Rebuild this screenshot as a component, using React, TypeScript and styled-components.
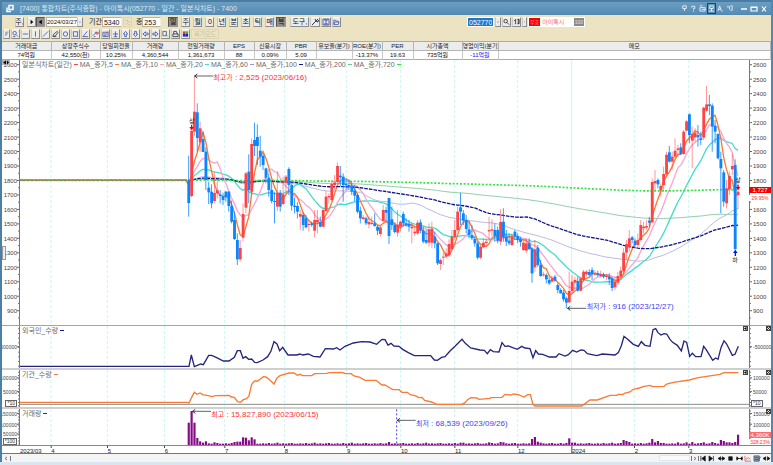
import React from "react";
import styled, { createGlobalStyle, css } from "styled-components";

const FONT = '"Liberation Sans", "Noto Sans CJK KR", sans-serif';

const GlobalStyle = createGlobalStyle`
  * { box-sizing: border-box; }
  html, body { margin: 0; padding: 0; }
  body { font-family: ${FONT}; font-size: 8px; color: #222; background: #d9e6ef; }
  button, input, select { font-family: inherit; margin: 0; }
`;

/* ---------- window frame ---------- */

const Window = styled.div`
  display: flex;
  flex-direction: column;
  height: 100vh;
  min-height: 300px;
  overflow: hidden;
`;

const Frame = styled.div`
  flex: 1;
  min-height: 0;
  display: flex;
  flex-direction: column;
  border-left: 2px solid #4d7fa6;
  border-right: 2px solid #5288b0;
  background: #fff;
`;

const TitleBar = styled.header`
  flex: none;
  display: flex;
  align-items: center;
  height: 15px;
  padding: 2px 2px 0 4px;
  background: linear-gradient(#4a7da4 0 2px, #6b9dc1 2px, #568cb5 14px, #4f83ab);
`;

const Title = styled.h1`
  margin: 0 0 0 6px;
  flex: 1;
  font-size: 7px;
  line-height: 12px;
  font-weight: 400;
  color: #dce9f3;
  white-space: pre;
`;

const WindowButtons = styled.div`
  display: flex;
  align-items: center;
  margin-left: 5px;
`;

const TitleButton = styled.button<{ $boxed?: boolean; $wide?: boolean }>`
  display: flex;
  align-items: center;
  justify-content: center;
  width: ${(p) => (p.$wide ? 10 : 9)}px;
  height: 11px;
  padding: 0;
  border: 1px solid ${(p) => (p.$boxed ? "#23425c" : "transparent")};
  background: transparent;
`;

/* ---------- toolbars ---------- */

const Toolbars = styled.div`
  flex: none;
  display: flex;
  flex-direction: column;
  gap: 2px;
  height: 26px;
  padding-top: 2px;
  background: #ebe3c2;
`;

const Bar = styled.div<{ $indent: number }>`
  display: flex;
  align-items: center;
  height: 10px;
  padding-left: ${(p) => p.$indent}px;
`;

const Cluster = styled.div<{ $gap: number; $after: number }>`
  display: flex;
  align-items: center;
  flex: none;
  gap: ${(p) => p.$gap}px;
  margin-right: ${(p) => p.$after}px;
`;

const ToolButton = styled.button<{ $w?: number; $on?: boolean }>`
  display: flex;
  align-items: center;
  justify-content: center;
  flex: none;
  width: ${(p) => p.$w ?? 9}px;
  height: 10px;
  padding: 0;
  border: 1px solid;
  border-color: ${(p) => (p.$on ? "#555 #999 #999 #555" : "#f8f8f8 #8b8b8b #8b8b8b #c8c8c8")};
  background: ${(p) => (p.$on ? "#8d8d8d" : "#ececec")};
  color: #111;
  font-size: 7px;
  line-height: 8px;
  white-space: nowrap;
  overflow: hidden;

  &:disabled {
    border-color: #ddd5b5;
    background: #ebe3c2;
    color: #c9c09c;
    font-size: 6px;
  }
`;

const Field = styled.input<{ $w: number; $selected?: boolean }>`
  width: ${(p) => p.$w}px;
  height: 10px;
  padding: 0 1px;
  border: 1px solid #b9b39a;
  border-right-color: #eee;
  background: #fff;
  color: #111;
  font-size: 7px;
  line-height: 8px;
  ${(p) =>
    p.$selected &&
    css`
      background: #1a78d0;
      color: #fff;
      border-color: #fff;
    `}
`;

const FieldLabel = styled.label`
  font-size: 7px;
  line-height: 10px;
  white-space: nowrap;
`;

const Combo = styled.div`
  display: flex;
  flex: none;
  height: 10px;
  background: #fff;
`;

const DateSelect = styled.select`
  appearance: none;
  width: 31px;
  height: 10px;
  padding: 0;
  border: 1px solid #b9b39a;
  border-right: 0;
  border-radius: 0;
  background: #fff;
  color: #111;
  font-size: 6px;
  line-height: 8px;
`;

const StockName = styled.div`
  display: flex;
  align-items: center;
  flex: none;
  width: 57px;
  height: 10px;
  gap: 2px;
  background: #fff;
  border: 1px solid #fff;
  color: #ff6f78;
  font-size: 6px;
  line-height: 8px;
`;

const Badge = styled.span<{ $tone: "alert" | "muted" }>`
  flex: none;
  height: 8px;
  padding: 0 1px;
  background: ${(p) => (p.$tone === "alert" ? "#f50000" : "#8a8a8a")};
  color: ${(p) => (p.$tone === "alert" ? "#ffa5a5" : "#e0e0e0")};
  font-size: 5px;
  line-height: 8px;
  white-space: nowrap;
`;

const NameText = styled.span`
  flex: 1;
  white-space: nowrap;
`;

const Spacer = styled.div`
  flex: 1;
`;

const StockCluster = styled.div`
  display: flex;
  align-items: center;
  flex: none;
  gap: 1px;
  margin-right: 186px;
`;

/* ---------- summary table ---------- */

const Summary = styled.table`
  flex: none;
  width: 100%;
  height: 19px;
  table-layout: fixed;
  border-collapse: collapse;
  border-top: 1px solid #aaa;
  border-bottom: 1px solid #aaa;
`;

const HeadCell = styled.th`
  height: 9px;
  padding: 0;
  border-right: 1px solid #b5b5b5;
  border-bottom: 1px solid #b5b5b5;
  background: #ececec;
  font-size: 6px;
  line-height: 8px;
  font-weight: 400;
  white-space: nowrap;
  overflow: hidden;
`;

const ValueCell = styled.td<{ $down?: boolean }>`
  height: 8px;
  padding: 0;
  border-right: 1px solid #c8c8c8;
  text-align: center;
  font-size: 6px;
  line-height: 8px;
  color: ${(p) => (p.$down ? "#1111ee" : "#111")};
  white-space: nowrap;
`;

/* ---------- chart ---------- */

const Chart = styled.main`
  flex: 1;
  min-height: 0;
  display: flex;
  flex-direction: column;
`;

const Panel = styled.section<{ $grow: number; $rule: number }>`
  display: grid;
  grid-template-columns: 18px minmax(0, 1fr) 22px;
  grid-template-rows: minmax(0, 1fr);
  flex: ${(p) => p.$grow} 1 0px;
  min-height: 0;
  position: relative;
  border-bottom: ${(p) => p.$rule}px solid ${(p) => (p.$rule === 1 ? "#a4a4a4" : "#cfcfcf")};
`;

const Canvas = styled.svg`
  display: block;
  width: 100%;
  height: 100%;
  overflow: hidden;
  font-family: ${FONT};
`;

const Legend = styled.div`
  position: absolute;
  top: 0;
  left: 20px;
  display: flex;
  align-items: center;
  gap: 2px;
  height: 9px;
  color: #6a6a6a;
  font-size: 7px;
  line-height: 9px;
  white-space: nowrap;
`;

const Dash = styled.i<{ $c: string }>`
  width: 4px;
  height: 1px;
  background: ${(p) => p.$c};
`;

const PanelButton = styled.button<{ $right: number }>`
  position: absolute;
  top: 0;
  right: ${(p) => p.$right}px;
  display: flex;
  align-items: center;
  justify-content: center;
  width: 5px;
  height: 5px;
  padding: 0;
  border: 1px solid #444;
  background: #ddd;
`;

const CornerButton = styled.button`
  position: absolute;
  top: 0;
  left: 0;
  display: flex;
  width: 8px;
  height: 5px;
  padding: 0;
  border: 0;
  background: #b4b4b4;
`;

const SideHandle = styled.button`
  position: absolute;
  top: 70%;
  left: 0;
  width: 4px;
  height: 14px;
  padding: 0;
  border: 1px solid #999;
  background: #eee;
`;

const ScaleTag = styled.span<{ $side: "left" | "right"; $bottom: number }>`
  position: absolute;
  ${(p) => (p.$side === "left" ? "right: calc(100% - 15px);" : "left: calc(100% - 20px);")}
  bottom: ${(p) => p.$bottom}px;
  padding: 0 1px;
  border: 1px solid #666;
  background: #fff;
  font-size: 5px;
  line-height: 5px;
  color: #333;
`;

const PriceTag = styled.span<{ $top: string; $bg?: string; $c: string }>`
  position: absolute;
  right: 0;
  top: ${(p) => p.$top};
  width: 22px;
  text-align: center;
  font-size: ${(p) => (p.$bg ? 6 : 5)}px;
  line-height: 6px;
  background: ${(p) => p.$bg ?? "#fff"};
  color: ${(p) => p.$c};
`;

const TimeAxis = styled.div`
  flex: none;
  height: 9px;
  padding: 0 22px 0 18px;
  border-top: 1px solid #888;
  border-bottom: 1px solid #777;
`;

const ScrollRow = styled.footer`
  flex: none;
  display: flex;
  align-items: center;
  height: 8px;
  background: #f4f4f4;
`;

const ScrollTrack = styled.div`
  flex: 1;
  display: flex;
  justify-content: flex-end;
  height: 6px;
`;

const ScrollThumb = styled.div`
  width: 31px;
  height: 6px;
  border: 1px solid #e6e6e6;
  background: #fafafa;
`;

const NavButton = styled.button`
  display: flex;
  align-items: center;
  justify-content: center;
  width: 9px;
  height: 7px;
  padding: 0;
  border: 0;
  background: transparent;
`;

const StatusStrip = styled.div`
  flex: none;
  height: 3px;
  background: #d9e6ef;
`;

/* ---------- data: three chart units per pixel, y grows downwards ---------- */

const FLAT = 361;
const FIRST_X = 566;
const STEP = 8.583;

// direction, high, body top, body bottom, low
const CANDLES = `
d287 361 429 470|u212 212 408 412|u48 155 215 228|d130 157 234 275|u185 205 247 275|d215 237 276 276|d262 275 360 390|d365 383 397 432|d373 395 430 445|u335 399 423 430
u355 391 400 415|d390 404 408 430|d398 409 420 435|d393 395 412 425|d393 395 438 455|d422 438 485 490|d455 480 537 540|d520 540 598 615|u540 564 598 605|u430 462 533 545
u335 340 443 460|d283 335 390 430|u235 252 395 405|d188 240 258 288|d193 231 258 315|d227 272 290 320|d280 287 315 330|d323 325 353 370|d340 353 390 410|d365 390 423 430
d395 423 426 490|u335 398 440 453|d390 398 440 455|u350 403 432 435|u345 350 368 400|d322 327 375 405|d370 375 437 452|d413 437 441 460|d427 438 455 475|u450 462 470 510
d458 465 495 512|d465 475 502 505|u480 492 495 515|d485 490 495 500|u450 480 512 532|u450 480 487 520|d470 486 500 502|u445 450 500 502|u393 410 453 455|u400 408 412 430
u360 372 420 425|u345 367 375 390|u307 318 366 372|d318 347 352 380|d340 350 375 425|d355 372 376 390|d360 375 380 390|d365 378 395 405|d375 392 407 425|d400 405 455 460
d440 452 475 490|u465 472 477 480|d470 475 490 495|u470 486 493 505|u470 488 492 495|d460 490 498 500|d495 500 512 525|u495 502 522 530|u435 450 483 485|d440 450 458 485
d413 414 528 552|d440 478 495 510|d490 495 516 520|u450 495 518 530|u482 485 500 515|d455 462 490 500|d475 490 495 500|d480 492 500 515|u490 500 505 550|u500 515 520 528
u480 488 520 525|d478 487 512 520|d500 512 545 550|d510 540 548 552|u490 508 548 560|u485 506 548 565|d515 530 550 565|d548 550 610 615|u595 600 612 630|u575 590 592 615
u565 580 590 595|u538 552 585 590|u510 530 567 570|u480 510 532 540|u440 455 510 515|d398 442 455 495|d450 460 482 495|d465 480 507 520|d485 508 525 535|d495 525 535 540
d528 537 550 560|d545 550 593 598|u555 560 593 598|u535 548 562 565|u535 545 549 560|u470 510 514 540|u478 508 512 530|d490 510 528 545|d500 510 542 550|u448 486 545 555
d445 485 533 545|d510 530 545 558|d520 542 550 555|u520 530 555 558|d510 515 530 540|d520 528 540 550|d530 538 546 560|u540 548 570 573|u538 550 572 580|d535 550 567 570
d562 565 640 668|u540 568 622 635|d555 563 615 620|d600 615 648 650|u635 643 646 650|d640 645 658 670|d650 660 670 675|u648 655 665 668|d645 650 662 665|d670 675 690 700
d685 690 700 700|d690 698 718 725|d710 715 728 745|u635 693 727 730|u645 665 693 700|u650 660 668 690|d650 663 692 695|u650 655 692 695|u630 635 660 665|u630 635 643 650
d628 636 645 650|d622 630 642 660|u632 640 644 648|d632 640 646 650|u632 642 648 652|d638 644 650 655|u642 648 651 660|d640 650 658 675|d650 655 684 693|u650 666 682 690
u636 648 668 675|u620 632 650 655|u565 578 634 640|u540 552 578 600|u510 535 562 575|d528 532 540 550|d535 542 555 565|u520 540 555 562|u480 495 540 545|u485 500 505 520
u480 498 503 510|d470 482 488 500|u355 366 487 490|u330 363 370 390|d355 360 373 385|u370 378 390 410|u320 342 375 395|u275 284 343 350|d258 277 305 308|u275 290 305 330
u235 272 290 295|u255 265 270 290|d250 262 282 285|u210 215 282 285|u180 184 212 215|d160 163 225 250|u200 222 242 325|u205 218 232 245|d195 225 232 260|d215 235 240 255
u140 143 233 240|u78 133 152 155|d105 133 138 165|d130 137 200 275|d180 198 215 250|d220 222 295 298|d275 297 325 460|d330 337 425 440|u360 385 430 445|u335 348 388 405
u282 318 328 345|d298 315 567 572|u360 395 405 448`
  .trim()
  .split(/[|\n]/)
  .map((row) => {
    const [high, top, bottom, low] = row.slice(1).split(" ").map(Number);
    return { up: row[0] === "u", high, top, bottom, low };
  });

const CLOSES = CANDLES.map((c) => (c.up ? c.top : c.bottom));

function movingAverage(days: number): string {
  let sum = FLAT * days;
  const points = [`60,${FLAT}`, `${FIRST_X - STEP},${FLAT}`];
  CLOSES.forEach((close, i) => {
    sum += close - (i >= days ? CLOSES[i - days] : FLAT);
    points.push(`${(FIRST_X + STEP * i).toFixed(1)},${(sum / days).toFixed(1)}`);
  });
  return points.join(" ");
}

const AVERAGES = [
  { days: 200, color: "#8fd0a8", width: 3 },
  { days: 60, color: "#bcb8e0", width: 3 },
  { days: 20, color: "#48dccb", width: 4 },
  { days: 10, color: "#f7a6d6", width: 4 },
  { days: 5, color: "#fb7a35", width: 4 },
  { days: 100, color: "#15158a", width: 4, dash: "11 3" },
  { days: 720, color: "#2fe43f", width: 5, dash: "6 5" },
];

const FOREIGN =
  "60,199 567,199 574,165 583,200 592,196 602,192 610,194 617,182 626,166 635,166 650,173 670,183 687,183 703,172 712,152 721,152 729,175 737,170 746,178 755,177 764,187 772,188 789,180 803,170 813,153 822,125 831,132 839,152 848,142 864,165 890,165 900,162 908,165 925,162 940,169 960,171 976,146 1000,147 1010,143 1020,150 1035,139 1060,129 1085,125 1110,126 1130,133 1146,118 1155,119 1164,135 1173,130 1182,138 1197,139 1208,148 1225,158 1243,167 1292,167 1303,180 1312,181 1325,172 1335,170 1350,153 1365,139 1386,118 1396,130 1412,144 1440,150 1453,151 1462,161 1471,149 1480,155 1497,156 1506,128 1515,139 1525,138 1538,143 1552,148 1565,139 1575,144 1590,146 1599,173 1607,152 1615,162 1628,163 1648,171 1668,171 1677,161 1695,168 1705,164 1718,151 1730,156 1743,150 1752,151 1762,161 1790,167 1807,162 1845,165 1855,158 1864,137 1872,109 1882,117 1900,133 1915,139 1924,125 1935,136 1950,139 1959,89 1967,86 1974,98 1983,105 1992,101 2000,102 2010,118 2018,127 2032,136 2044,153 2052,123 2060,127 2069,169 2077,160 2087,170 2103,170 2111,139 2120,151 2138,181 2147,174 2154,178 2163,143 2172,122 2180,132 2197,166 2205,163 2215,139";

const INSTITUTION =
  "60,307 560,307 567,309 576,290 583,277 591,283 600,279 608,284 625,287 635,290 647,287 687,286 695,291 703,292 713,305 721,307 730,299 740,296 747,288 755,253 764,243 773,243 790,230 798,231 812,242 822,252 831,234 840,227 867,219 882,219 892,226 900,223 908,227 935,227 944,221 980,220 988,218 1027,217 1035,221 1053,221 1062,228 1080,232 1095,241 1128,241 1146,255 1155,255 1170,264 1178,269 1197,269 1206,277 1222,277 1231,284 1245,287 1257,293 1266,292 1274,301 1295,306 1310,313 1385,313 1395,308 1403,299 1412,293 1430,294 1437,298 1470,295 1472,293 1506,292 1515,283 1533,285 1540,282 1555,284 1572,291 1583,284 1591,284 1599,313 1605,318 1745,318 1752,313 1770,300 1792,300 1830,286 1850,286 1855,283 1870,283 1875,279 1890,276 1900,268 1918,264 1932,259 1950,256 1958,260 1992,259 2000,252 2020,247 2068,240 2095,233 2160,223 2172,218 2215,218";

const QUIET_VOLUME = [5, 4, 6, 4, 5, 7, 4, 5, 4, 5, 6, 4, 4];
const BUSY_VOLUME: Record<number, number> = {
  0: 67, 1: 102, 2: 67, 3: 21, 4: 11, 6: 11, 9: 8, 16: 9, 17: 10, 18: 10, 19: 23, 20: 22, 21: 14,
  22: 23, 23: 17, 70: 9, 95: 7, 105: 8, 109: 9, 110: 8, 119: 5, 120: 18, 121: 24, 122: 10, 123: 7,
  130: 6, 133: 20, 134: 7, 151: 6, 152: 15, 153: 12, 154: 9, 162: 18, 163: 8, 164: 12, 165: 6,
  171: 8, 174: 8, 176: 9, 180: 8, 183: 9, 186: 15, 187: 12, 188: 8, 189: 8, 190: 6, 191: 9, 192: 31,
};

const MONTHS: Array<[string, number]> = [
  ["4", 153], ["5", 322], ["6", 493], ["7", 674], ["8", 853], ["9", 1040],
  ["10", 1202], ["11", 1364], ["12", 1553], ["2024", 1715], ["2", 1903], ["3", 2066],
];

const atX = (x: number) => `${((x - 60) / 2187) * 100}%`;

/* ---------- chart parts ---------- */

function Plot({ top, height, children, overlay }: {
  top: number;
  height: number;
  children: React.ReactNode;
  overlay?: React.ReactNode;
}) {
  return (
    <Canvas>
      <svg viewBox={`60 ${top} 2187 ${height}`} preserveAspectRatio="none" width="100%" height="100%">
        {MONTHS.map(([name, x]) => (
          <line key={name} x1={x} x2={x} y1={top} y2={top + height} stroke="#cdf5f5" strokeWidth="3"
            strokeDasharray={name === "2024" ? undefined : "9 6"} />
        ))}
        {children}
      </svg>
      {overlay}
    </Canvas>
  );
}

function Note({ x, y, color, name, value }: {
  x: number;
  y: string;
  color: string;
  name: string;
  value: string;
}) {
  return (
    <text x={atX(x)} y={y} fontSize="8" fill={color}>
      <tspan fontSize="7">{name}</tspan> : {value}
    </text>
  );
}

function Pointer({ x, y, length }: { x: number; y: number; length: number }) {
  return (
    <g stroke="#444" strokeWidth="2.5" fill="none">
      <path d={`M${x} ${y}h${length}`} />
      <path d={`M${x + 9} ${y - 6}L${x + 1} ${y}l8 6`} stroke="#111" />
    </g>
  );
}

function Axis({ side, labels, minor }: {
  side: "left" | "right";
  labels: Array<[string, number]>;
  minor: number[];
}) {
  const left = side === "left";
  return (
    <Canvas>
      <rect x={left ? 17 : 0} y="0" width="1" height="100%" fill="#777" />
      {minor.map((y) => (
        <rect key={y} x={left ? 16 : 1} y={`${y}%`} width="1" height="1" fill="#777" />
      ))}
      {labels.map(([text, y]) => (
        <g key={text + y}>
          <rect x={left ? 15 : 1} y={`${y}%`} width="2" height="1" fill="#666" />
          <text x={left ? 15 : 4} y={`${y}%`} dy="3" fontSize={text.length > 4 ? 5 : 6} fill="#444"
            textAnchor={left ? "end" : "start"}>{text}</text>
        </g>
      ))}
    </Canvas>
  );
}

const priceY = (price: number) => ((4.2 + (2600 - price) * 0.1447) / 265) * 100;
const PRICE_LABELS: Array<[string, number]> = Array.from({ length: 18 }, (_, i) => {
  const price = 2600 - i * 100;
  return [String(price), priceY(price)];
});
// The current price and its change take the place of the 1700 label.
const RIGHT_PRICE_LABELS = PRICE_LABELS.filter(([text]) => text !== "1700");
const PRICE_MINOR = Array.from({ length: 18 }, (_, i) => priceY(2550 - i * 100));
const spread = (count: number) => Array.from({ length: count }, (_, i) => ((i + 0.5) / count) * 100);

function Averages() {
  return (
    <>
      {AVERAGES.map((a) => (
        <polyline key={a.days} points={movingAverage(a.days)} fill="none" stroke={a.color}
          strokeWidth={a.width} strokeDasharray={a.dash} />
      ))}
      <path d="M60 361H560" stroke="#b0744f" strokeWidth="4" />
      <path d="M60 361H560" stroke="#62b850" strokeWidth="4" strokeDasharray="6 8" />
    </>
  );
}

function Candles() {
  return (
    <>
      {CANDLES.map((c, i) => {
        const x = FIRST_X + STEP * i;
        const color = c.up ? "#ff4345" : "#0a84ff";
        return (
          <g key={i} fill={color}>
            <rect x={x - 1.5} y={c.high} width="3" height={c.low - c.high} opacity={c.up ? 0.55 : 0.8} />
            <rect x={x - 4} y={c.top} width="8.5" height={Math.max(3, c.bottom - c.top)} />
          </g>
        );
      })}
    </>
  );
}

function Volumes() {
  return (
    <>
      {CANDLES.map((_, i) => {
        const h = BUSY_VOLUME[i] ?? QUIET_VOLUME[i % QUIET_VOLUME.length];
        return <rect key={i} x={FIRST_X - 3 + STEP * i} y={435 - h} width="6.5" height={h} fill="#850a85" />;
      })}
    </>
  );
}

/* ---------- small icons ---------- */

const ICONS: Record<string, React.ReactNode> = {
  frame: <path d="M3 7V1h4M3 4h3" />,
  search: <><circle cx="3" cy="3" r="2" /><path d="M4.500 4.500L7 7M1 7h3" /></>,
  hline: <path d="M1 4h6" />,
  vline: <path d="M4 1v6" />,
  slash: <path d="M1 7L7 1" />,
  pen: <path d="M1 7l1-3 4-3 1 1-3 4zM2 7h3" stroke="#333" />,
  circle: <circle cx="4" cy="4" r="2.500" />,
  square: <rect x="1.500" y="1.500" width="5" height="5" />,
  angle: <path d="M6 1L1 7h6" />,
  mark: <><path d="M1 6l4-4M2 7h2" /><path d="M4 2h3v2H5z" stroke="#b33" /></>,
  note: <><path d="M1 2h6v5H1zM2 4h4M2 6h3" /><path d="M5 3l2-2" stroke="#b33" /></>,
  cross: <path d="M4 1v6M1 4h6M2 7h4" />,
  up: <path d="M4 1L1.500 4H3v3h2V4h1.500z" />,
  down: <path d="M4 7L1.500 4H3V1h2v3h1.500z" />,
  left: <path d="M1 4l3-2.500V3h3v2H4v1.500z" />,
  right: <path d="M7 4L4 1.500V3H1v2h3v1.500z" />,
  copy: <><path d="M1 1h4v5H1z" stroke="#455" /><path d="M4 4l3 3" stroke="#2a8" /></>,
  print: <path d="M1 4h6v3H1zM2 4V1h3l1 3" stroke="#223" />,
  palette: <><path d="M1 1h3v3H1z" fill="#e33" stroke="none" /><path d="M4 1h3v3H4z" fill="#3b3" stroke="none" /><path d="M1 4h3v3H1z" fill="#22d" stroke="none" /><path d="M4 4h3v3H4z" fill="#228" stroke="none" /></>,
  wrench: <path d="M1 7l4-4M4 1l1 2 2 1 .5-2M5 3l2-2" stroke="#223" />,
  save: <path d="M1 1h6v6H1zM3 1v2h2V1M3 7V5h2v2" />,
  open: <path d="M1 7V2h2l1 1h2v1M1 7l1-3h5L6 7z" />,
  find: <><circle cx="3" cy="3" r="2" stroke="#222" /><path d="M4.500 4.500L7 7" stroke="#222" /></>,
  sound: <path d="M3 6V1M2 6h1M1 3l2-2M5 1h2v5H5M6 1v5" stroke="#222" />,
  caret: <path d="M2.500 3.500h3L4 5.500z" fill="#333" stroke="none" />,
  play: <path d="M3 1.500v5L6 4z" fill="#000" stroke="none" />,
  back: <path d="M5.500 1.500v5L2 4z" fill="#000" stroke="none" />,
  steps: <path d="M1 2h3v2h3M2 6h2M5 7h2" stroke="#c9c09c" />,
};

function Icon({ name }: { name: string }) {
  return (
    <svg width="8" height="8" viewBox="0 0 8 8" fill="none" stroke="#3a4f9e" strokeWidth="0.9">
      {ICONS[name]}
    </svg>
  );
}

const TITLE_ICONS: Array<[string, React.ReactNode, boolean?]> = [
  ["고정", <path d="M2 1h4v3H2zM4 4v3" />],
  ["도움말", <path d="M2 3V1.500h3.500V4H4v1M4 6v1.500" />],
  ["화면 복사", <path d="M1 3h6v4H1zM1 1h3M3 5h4" />],
  ["글꼴", <path d="M2 1h4v3H2zM4 4v3M1 7h6" />, true],
  ["글자 크기", <path d="M1 7l2-6 2 6M2 5h2M6 7h1" />],
  ["메뉴", <path d="M1 2h3M4 2v3M5 1h2v5H5" />],
];

const WINDOW_ICONS: Array<[string, React.ReactNode]> = [
  ["최소화", <path d="M1 4h6" strokeWidth="1.500" />],
  ["최대화", <path d="M1 2h6v4H1zM1 2.500h6" />],
  ["닫기", <path d="M2 1.500l4 5M6 1.500l-4 5" />],
];

const NAV_ICONS: Array<[string, React.ReactNode]> = [
  ["처음", <path d="M2 1v6M7 1v6L3 4z" />],
  ["끝", <path d="M6 1v6M1 1v6l4-3z" />],
  ["확대", <path d="M1 4l3-2v4zM9 4L6 2v4zM3 4h4" />],
  ["정지", <path d="M3 2h4v4H3z" />],
  ["축소", <path d="M4 4L2 2v4zM6 4l2-2v4zM1 4h8" />],
  ["추세", <path d="M1 1v6h7M2 5l3-2 2 2" fill="none" stroke="#d33" />],
  ["표시", <path d="M1 1h6v6H1zM2 3h4M2 5h4M5 6l4-4" fill="#9ab" stroke="#334" />],
  ["좌우", <path d="M1 4l3-2v4zM9 4L6 2v4z" />],
];

/* ---------- page ---------- */

const PERIODS = ["일", "주", "월", "0", "년", "분", "초", "틱"];

const DRAW_TOOLS: Array<[string, string]> = [
  ["탐색", "search"], ["수평선", "hline"], ["수직선", "vline"], ["추세선", "slash"], ["펜", "pen"],
  ["원", "circle"], ["사각형", "square"], ["각도", "angle"], ["표시", "mark"], ["메모", "note"],
  ["십자선", "cross"], ["위", "up"], ["아래", "down"], ["왼쪽", "left"], ["오른쪽", "right"],
  ["복사", "copy"], ["인쇄", "print"], ["색상", "palette"],
];

const COLUMNS: Array<[string, string, number?]> = [
  ["거래대금", "74억원", 49], ["상장주식수", "42,550(천)", 49], ["당일회전율", "10.25%", 32],
  ["거래량", "4,360,544", 46], ["전일거래량", "1,361,673", 46], ["EPS", "88", 30],
  ["신용시장", "0.09%", 32], ["PBR", "5.09", 30], ["유보율(분기)", "", 36],
  ["ROE(분기)", "-13.37%", 30], ["PER", "19.63", 31], ["시가총액", "735억원", 49],
  ["영업이익(분기)", "-11억원", 36], ["메모", ""],
];

const LEGEND: Array<[string, string]> = [
  ["일본식차트(일간)", "#ff4345"], ["MA_종가,5", "#fb7a35"], ["MA_종가,10", "#f7a6d6"],
  ["MA_종가,20", "#48dccb"], ["MA_종가,60", "#9c97d4"], ["MA_종가,100", "#15158a"],
  ["MA_종가,200", "#6cc48e"], ["MA_종가,720", "#2fe43f"],
];

function PanelButtons() {
  return (
    <>
      <PanelButton $right={23} aria-label="지표 이동"><svg width="3" height="3"><path d="M2.500 0v3L0 1.500z" /></svg></PanelButton>
      <PanelButton $right={0} aria-label="지표 닫기"><svg width="3" height="3"><path d="M0 0l3 3M3 0L0 3" stroke="#333" /></svg></PanelButton>
    </>
  );
}

export default function App() {
  return (
    <Window>
      <GlobalStyle />
      <Frame>
        <TitleBar>
          <svg width="8" height="9" viewBox="0 0 8 9" fill="none" stroke="#fff" strokeWidth="1.500">
            <path d="M3 1.500h4v4H3z" /><path d="M5 7.500H1v-4" />
          </svg>
          <Title>[7400] 통합차트(주식종합) - 아이톡시(052770 - 일간 - 일본식차트) - 7400</Title>
          <WindowButtons>
            {TITLE_ICONS.map(([name, shape, boxed]) => (
              <TitleButton key={name} aria-label={name} $boxed={boxed}>
                <svg width="7" height="7" viewBox="0 0 8 8" fill="none" stroke="#eef4f9" strokeWidth="1">{shape}</svg>
              </TitleButton>
            ))}
          </WindowButtons>
          <WindowButtons>
            {WINDOW_ICONS.map(([name, shape]) => (
              <TitleButton key={name} aria-label={name} $wide>
                <svg width="8" height="8" viewBox="0 0 8 8" fill="none" stroke="#fff" strokeWidth="1.200">{shape}</svg>
              </TitleButton>
            ))}
          </WindowButtons>
        </TitleBar>

        <Toolbars>
          <Bar $indent={13}>
            <Cluster $gap={0} $after={3}><ToolButton>주,</ToolButton></Cluster>
            <Cluster $gap={0} $after={1}>
              <ToolButton aria-label="다음"><Icon name="play" /></ToolButton>
              <ToolButton $on aria-label="이전"><Icon name="back" /></ToolButton>
            </Cluster>
            <Cluster $gap={0} $after={6}>
              <Combo>
                <DateSelect aria-label="기준일" defaultValue="2024/03/27"><option>2024/03/27</option></DateSelect>
                <ToolButton $w={6} aria-label="날짜 열기"><Icon name="caret" /></ToolButton>
              </Combo>
            </Cluster>
            <Cluster $gap={0} $after={1}>
              <FieldLabel htmlFor="days">기간</FieldLabel>
              <Field id="days" $w={20} defaultValue="5340" />
            </Cluster>
            <Cluster $gap={0} $after={4}><ToolButton disabled aria-label="단계"><Icon name="steps" /></ToolButton></Cluster>
            <Cluster $gap={0} $after={7}>
              <FieldLabel htmlFor="kind">종</FieldLabel>
              <Field id="kind" $w={19} defaultValue="253" />
            </Cluster>
            <Cluster $gap={3} $after={3}>
              {PERIODS.map((p, i) => <ToolButton key={p} $on={i === 0} $w={i === 0 ? 10 : 9}>{p}</ToolButton>)}
            </Cluster>
            <Cluster $gap={2} $after={4}>
              <ToolButton>매</ToolButton>
              <ToolButton $on $w={10}>복</ToolButton>
            </Cluster>
            <Cluster $gap={1} $after={0}>
              <ToolButton $w={19}>도구,</ToolButton>
              <ToolButton aria-label="설정" $w={10}><Icon name="wrench" /></ToolButton>
              <ToolButton aria-label="저장" $w={10}><Icon name="save" /></ToolButton>
              <ToolButton aria-label="열기"><Icon name="open" /></ToolButton>
            </Cluster>
            <Spacer />
            <StockCluster>
              <Field $w={27} $selected defaultValue="052770" aria-label="종목코드" />
              <ToolButton $w={6} aria-label="종목 목록"><Icon name="caret" /></ToolButton>
              <ToolButton aria-label="종목 검색"><Icon name="find" /></ToolButton>
              <ToolButton aria-label="소리"><Icon name="sound" /></ToolButton>
              <ToolButton $w={5} aria-label="소리 목록"><Icon name="caret" /></ToolButton>
              <StockName>
                <Badge $tone="alert">우호</Badge>
                <NameText>아이톡시</NameText>
                <Badge $tone="muted">100</Badge>
              </StockName>
            </StockCluster>
          </Bar>
          <Bar $indent={1}>
            <Cluster $gap={1} $after={1}>
              <ToolButton $w={7} aria-label="틀"><Icon name="frame" /></ToolButton>
              {DRAW_TOOLS.map(([name, icon]) => (
                <ToolButton key={name} aria-label={name}><Icon name={icon} /></ToolButton>
              ))}
            </Cluster>
            <ToolButton $w={28} disabled>복기모드</ToolButton>
          </Bar>
        </Toolbars>

        <Summary>
          <colgroup>
            {COLUMNS.map(([name, , w]) => <col key={name} width={w} />)}
          </colgroup>
          <thead>
            <tr>{COLUMNS.map(([name]) => <HeadCell key={name} scope="col">{name}</HeadCell>)}</tr>
          </thead>
          <tbody>
            <tr>{COLUMNS.map(([name, value]) => <ValueCell key={name} $down={value === "-11억원"}>{value}</ValueCell>)}</tr>
          </tbody>
        </Summary>

        <Chart>
          <Panel $grow={265} $rule={1}>
            <Axis side="left" labels={PRICE_LABELS} minor={PRICE_MINOR} />
            <Plot top={0} height={795} overlay={
              <>
                <Note x={640} y="7.600%" color="#ff3333" name="최고가" value="2,525 (2023/06/16)" />
                <Note x={1760} y="94%" color="#4343f0" name="최저가" value="916 (2023/12/27)" />
                <g fontSize="6" fill="#222" textAnchor="middle">
                  <text x={atX(575)} y="23.600%">상</text>
                  <text x={atX(2214)} y="46.200%">상</text>
                  <text x={atX(2205)} y="76.400%">하</text>
                </g>
              </>
            }>
              <Averages />
              <Candles />
              <Pointer x={583} y={48} length={57} />
              <Pointer x={1702} y={745} length={57} />
              <g fill="#e80000">
                <path d="M573 194h4v7h5l-7 10l-7 -10h5z" />
                <path d="M2212 374h4v7h5l-7 10l-7 -10h5z" />
              </g>
              <path d="M2204 588h4v-9h5l-7 -10l-7 10h5z" fill="#1010f0" />
            </Plot>
            <Axis side="right" labels={RIGHT_PRICE_LABELS} minor={PRICE_MINOR} />
            <Legend>
              {LEGEND.map(([name, color]) => <React.Fragment key={name}>{name}<Dash $c={color} /></React.Fragment>)}
            </Legend>
            <CornerButton aria-label="축 이동"><svg width="8" height="5"><path d="M1 2.500l3-2v4zM7 2.500l-2-2v4z" /></svg></CornerButton>
            <SideHandle aria-label="패널 펼치기" />
            <PriceTag $top="48%" $bg="#f40000" $c="#fff">1,727</PriceTag>
            <PriceTag $top="51%" $c="#ff3333">29.95%</PriceTag>
          </Panel>

          <Panel $grow={42} $rule={2}>
            <Axis side="left" labels={[["-500000", 48]]} minor={spread(9)} />
            <Plot top={78} height={126}>
              <polyline points={FOREIGN} fill="none" stroke="#25257c" strokeWidth="4" />
            </Plot>
            <Axis side="right" labels={[["-500000", 48]]} minor={spread(9)} />
            <Legend>외국인_수량<Dash $c="#15158a" /></Legend>
            <PanelButtons />
          </Panel>

          <Panel $grow={37} $rule={2}>
            <Axis side="left" labels={[["100000", 20], ["50000", 57]]} minor={spread(11)} />
            <Plot top={210} height={111}>
              <path d="M60 313H2247" stroke="#8c8c86" strokeWidth="3" />
              <polyline points={INSTITUTION} fill="none" stroke="#fb7a35" strokeWidth="4" />
            </Plot>
            <Axis side="right" labels={[["100000", 20], ["50000", 57]]} minor={spread(11)} />
            <Legend>기관_수량<Dash $c="#fb7a35" /></Legend>
            <PanelButtons />
            <ScaleTag $side="left" $bottom={0}>*10</ScaleTag>
            <ScaleTag $side="right" $bottom={0}>*10</ScaleTag>
          </Panel>

          <Panel $grow={36} $rule={0}>
            <Axis side="left" labels={[["150000", 11], ["100000", 41], ["50000", 68]]} minor={spread(12)} />
            <Plot top={327} height={108} overlay={
              <>
                <Note x={634} y="22%" color="#ff3333" name="최고" value="15,827,890 (2023/06/15)" />
                <Note x={1248} y="48%" color="#4343f0" name="최저" value="68,539 (2023/09/26)" />
              </>
            }>
              <Volumes />
              <path d="M1190 328V435" stroke="#4343f0" strokeWidth="3" strokeDasharray="6 6" />
              <Pointer x={577} y={334} length={56} />
              <Pointer x={1191} y={361} length={56} />
            </Plot>
            <Axis side="right" labels={[["150000", 11], ["100000", 41]]} minor={spread(12)} />
            <Legend>거래량<Dash $c="#850a85" /></Legend>
            <PanelButton $right={0} aria-label="지표 닫기"><svg width="3" height="3"><path d="M0 0l3 3M3 0L0 3" stroke="#333" /></svg></PanelButton>
            <ScaleTag $side="left" $bottom={0}>*100</ScaleTag>
            <PriceTag $top="64%" $bg="#ff6b6b" $c="#fff">4,360K</PriceTag>
            <PriceTag $top="82%" $c="#ff3333">328.23%</PriceTag>
          </Panel>

          <TimeAxis>
            <Canvas>
              <g fontSize="6" fill="#222">
                <text x="0" y="7">2023/03</text>
                {MONTHS.map(([name, x]) => (
                  <React.Fragment key={name}>
                    <rect x={atX(x - 1)} y="0" width="1" height={name === "2024" ? 8 : 2} fill="#444" />
                    <text x={atX(x + 1)} y="7">{name}</text>
                  </React.Fragment>
                ))}
              </g>
            </Canvas>
          </TimeAxis>
        </Chart>

        <ScrollRow>
          <NavButton aria-label="왼쪽으로"><svg width="9" height="7"><path d="M5 2L3 3.500 5 5M8.500 1v5" fill="none" stroke="#777" /></svg></NavButton>
          <ScrollTrack><ScrollThumb /></ScrollTrack>
          <NavButton aria-label="오른쪽으로"><svg width="9" height="7"><path d="M4 2l2 1.500L4 5M8.500 1v5M1.500 1v5" fill="none" stroke="#777" /></svg></NavButton>
          {NAV_ICONS.map(([name, shape]) => (
            <NavButton key={name} aria-label={name}>
              <svg width="9" height="7" viewBox="0 0 10 8" fill="#111" stroke="#111" strokeWidth="0.8">{shape}</svg>
            </NavButton>
          ))}
        </ScrollRow>
      </Frame>
      <StatusStrip />
    </Window>
  );
}
